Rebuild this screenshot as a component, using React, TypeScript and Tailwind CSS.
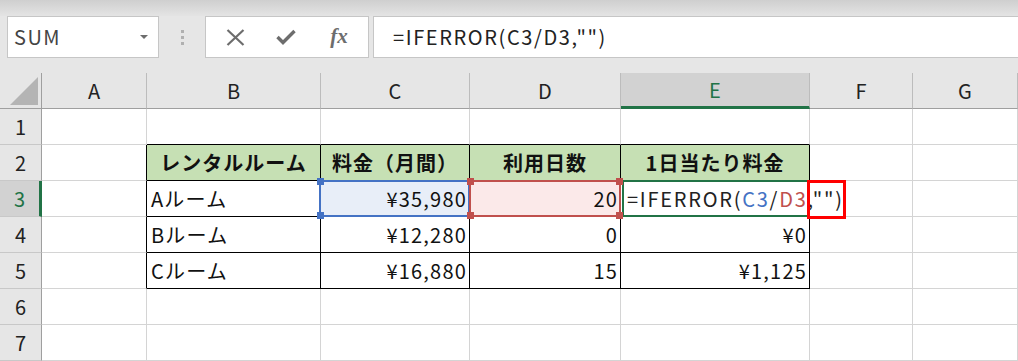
import React from "react";

const colLetters = ["A", "B", "C", "D", "E", "F", "G"];

type Cell = { text?: string; bold?: boolean; align?: "left" | "right" | "center"; head?: boolean };

// B..E are columns 1..4, table spans rows 2..5
const data: Record<number, Cell[]> = {
    2: [
        { text: "レンタルルーム", bold: true, align: "center", head: true },
        { text: "料金（月間）", bold: true, align: "center", head: true },
        { text: "利用日数", bold: true, align: "center", head: true },
        { text: "1日当たり料金", bold: true, align: "center", head: true },
    ],
    3: [{ text: "Aルーム" }, { text: "¥35,980", align: "right" }, { text: "20", align: "right" }, {}],
    4: [{ text: "Bルーム" }, { text: "¥12,280", align: "right" }, { text: "0", align: "right" }, { text: "¥0", align: "right" }],
    5: [{ text: "Cルーム" }, { text: "¥16,880", align: "right" }, { text: "15", align: "right" }, { text: "¥1,125", align: "right" }],
};

function inTable(r: number, c: number) {
    return r >= 2 && r <= 5 && c >= 1 && c <= 4;
}

function Handle({ pos, color }: { pos: string; color: string }) {
    return <span className={`absolute z-10 h-[7px] w-[7px] ${pos} ${color}`} />;
}

function GridCell({ r, c }: { r: number; c: number }) {
    const bottomBlack = inTable(r, c) || inTable(r + 1, c);
    const rightBlack = inTable(r, c) || inTable(r, c + 1);
    const cell = inTable(r, c) ? data[r][c - 1] : undefined;

    let bg = "bg-white";
    if (cell?.head) bg = "bg-[#c6e0b4]";
    if (r === 3 && c === 2) bg = "bg-[#e8eef8]";
    if (r === 3 && c === 3) bg = "bg-[#fbe9e9]";

    const justify =
        cell?.align === "right" ? "justify-end pr-[2px]" : cell?.align === "center" ? "justify-center" : "justify-start pl-[4px]";

    return (
        <div
            className={`relative flex h-[36px] items-center border-r border-b ${bg} ${justify} ${
                bottomBlack ? "border-b-black" : "border-b-[#d4d4d4]"
            } ${rightBlack ? "border-r-black" : "border-r-[#d4d4d4]"}`}
        >
            {cell?.text && (
                <span
                    className={`whitespace-nowrap text-[20px] text-[#111] ${
                        cell.bold ? "font-bold tracking-[1px]" : "tracking-[1.2px]"
                    }`}
                >
                    {cell.text}
                </span>
            )}

            {r === 3 && c === 2 && (
                <div className="absolute -top-[1px] -left-[2px] -right-[1px] -bottom-[1px] border-2 border-[#4472c4]">
                    <Handle pos="-top-[4px] -left-[4px]" color="bg-[#4472c4]" />
                    <Handle pos="-bottom-[4px] -left-[4px]" color="bg-[#4472c4]" />
                </div>
            )}
            {r === 3 && c === 3 && (
                <div className="absolute -top-[1px] -left-[1px] -right-[1px] -bottom-[1px] border-2 border-[#c0504d]">
                    <Handle pos="-top-[4px] -left-[4px]" color="bg-[#c0504d]" />
                    <Handle pos="-bottom-[4px] -left-[4px]" color="bg-[#c0504d]" />
                    <Handle pos="-top-[4px] -right-[4px]" color="bg-[#c0504d]" />
                    <Handle pos="-bottom-[4px] -right-[4px]" color="bg-[#c0504d]" />
                </div>
            )}
            {r === 3 && c === 4 && (
                <>
                    <div className="absolute -top-[1px] left-[1px] -right-[1px] -bottom-[1px] border-2 border-[#217346]" />
                    <span className="relative z-10 whitespace-nowrap pl-[2px] text-[20px] tracking-[1.75px] text-[#222]">
                        =IFERROR(<span className="text-[#4472c4]">C3</span>/<span className="text-[#c0504d]">D3</span>,"")
                    </span>
                    {/* red highlight box */}
                    <div className="absolute z-20 -top-[1px] -right-[37px] h-[39px] w-[39px] border-[3px] border-[#ff0000]" />
                </>
            )}
        </div>
    );
}

export default function App() {
    return (
        <div className="h-[361px] w-[1018px] overflow-hidden bg-[#e6e6e6] font-['Noto_Sans_CJK_JP',sans-serif] text-[#222]">
            {/* window top gradient */}
            <div className="h-[16px] bg-gradient-to-b from-[#cfcfcf] to-[#e4e4e4]" />

            {/* formula bar */}
            <div className="flex h-[57px] items-start pl-[7px]">
                <div className="flex h-[42px] w-[152px] items-center justify-between border border-[#c6c6c6] bg-white pl-[6px] pr-[10px]">
                    <span className="text-[20px] tracking-[1.5px] text-[#444]">SUM</span>
                    <svg width="8" height="5" viewBox="0 0 8 5">
                        <path d="M0 0h8L4 4z" fill="#6d6d6d" />
                    </svg>
                </div>
                <div className="flex h-[42px] w-[46px] flex-col items-center justify-center gap-[3px]">
                    <span className="h-[3px] w-[3px] bg-[#b0b0b0]" />
                    <span className="h-[3px] w-[3px] bg-[#b0b0b0]" />
                    <span className="h-[3px] w-[3px] bg-[#b0b0b0]" />
                </div>
                <div className="flex h-[42px] w-[164px] items-center border border-[#c6c6c6] bg-white">
                    <div className="flex w-[56px] justify-center pl-[2px]">
                        <svg width="19" height="17" viewBox="0 0 19 17">
                            <path d="M1.5 1l16 15M17.5 1l-16 15" stroke="#6d6d6d" strokeWidth="2.2" />
                        </svg>
                    </div>
                    <div className="flex w-[48px] justify-center">
                        <svg width="20" height="16" viewBox="0 0 20 16">
                            <path d="M1.5 8l5.5 5.5L18.5 2" stroke="#6d6d6d" strokeWidth="3.4" fill="none" />
                        </svg>
                    </div>
                    <div className="flex w-[58px] justify-center">
                        <span className="font-['Liberation_Serif',serif] text-[21px] font-bold italic text-[#6d6d6d]">fx</span>
                    </div>
                </div>
                <div className="ml-[4px] flex h-[42px] flex-1 items-center border border-r-0 border-[#c6c6c6] bg-white pl-[19px]">
                    <span className="text-[20px] tracking-[1.6px] text-[#222]">=IFERROR(C3/D3,"")</span>
                </div>
            </div>

            {/* sheet */}
            <div className="grid grid-cols-[42px_105px_174px_149px_151px_189px_103px_105px]">
                {/* column header row */}
                <div className="flex h-[36px] items-end justify-end border-r border-b border-[#9f9f9f] bg-[#e6e6e6] pr-[3px] pb-[3px]">
                    <svg width="28" height="28" viewBox="0 0 28 28">
                        <path d="M28 0V28H0z" fill="#b4b4b4" />
                    </svg>
                </div>
                {colLetters.map((l) => (
                    <div
                        key={l}
                        className={`flex h-[36px] items-center justify-center border-r border-r-[#bcbcbc] text-[20px] ${
                            l === "E"
                                ? "border-b-[3px] border-b-[#217346] bg-[#d2d2d2] text-[#217346]"
                                : "border-b border-b-[#9f9f9f] bg-[#e6e6e6] text-[#222]"
                        }`}
                    >
                        {l}
                    </div>
                ))}

                {[1, 2, 3, 4, 5, 6, 7].map((r) => (
                    <React.Fragment key={r}>
                        <div
                            className={`flex h-[36px] items-center justify-center border-b border-b-[#c8c8c8] text-[20px] ${
                                r === 3
                                    ? "border-r-[3px] border-r-[#217346] bg-[#d2d2d2] text-[#217346]"
                                    : "border-r border-r-[#9f9f9f] bg-[#e6e6e6] text-[#222]"
                            }`}
                        >
                            {r}
                        </div>
                        {colLetters.map((_, i) => (
                            <GridCell key={i} r={r} c={i} />
                        ))}
                    </React.Fragment>
                ))}
            </div>
        </div>
    );
}
